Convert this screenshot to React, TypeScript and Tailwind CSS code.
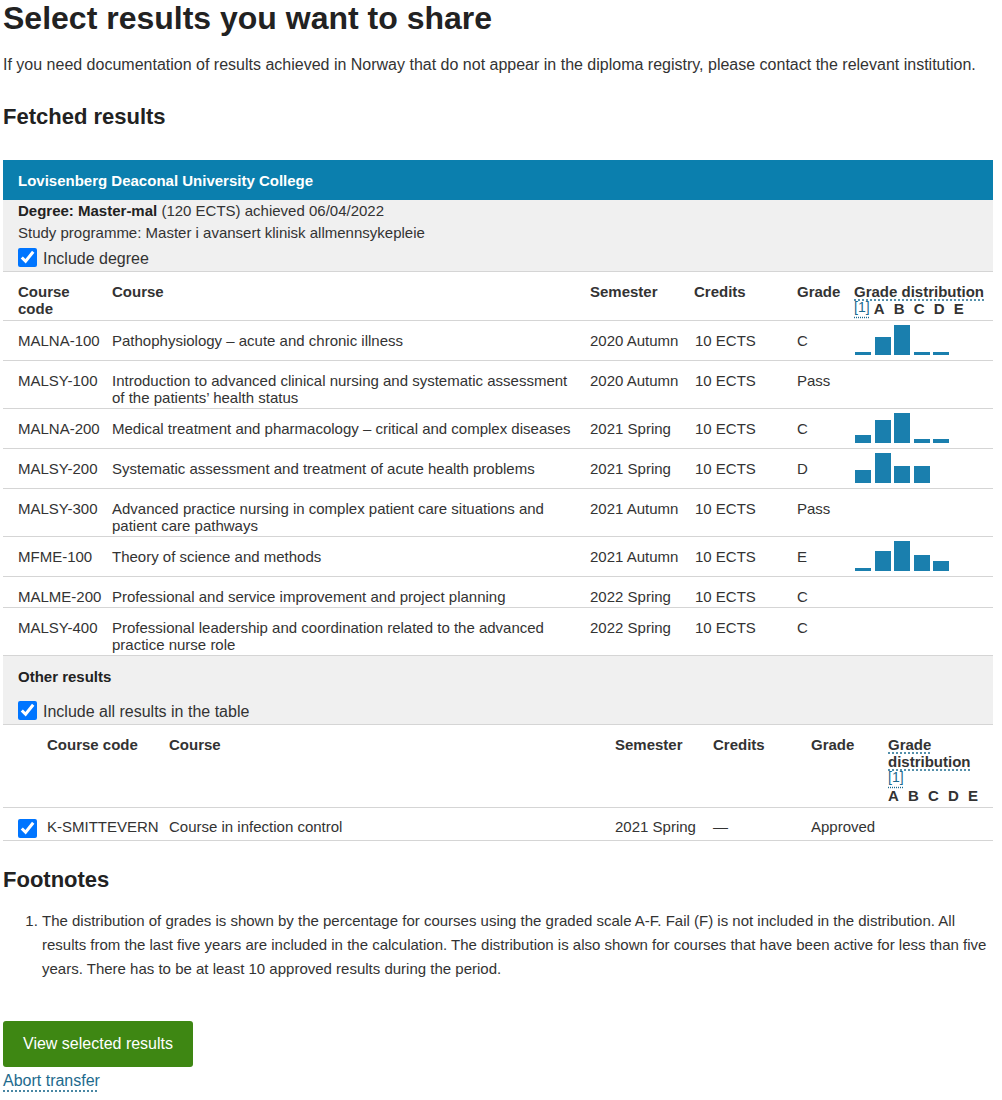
import { useState } from 'react';

interface Result {
  code: string;
  name: string;
  semester: string;
  credits: string;
  grade: string;
  dist?: number[];
}

const results: Result[] = [
  { code: 'MALNA-100', name: 'Pathophysiology – acute and chronic illness', semester: '2020 Autumn', credits: '10 ECTS', grade: 'C', dist: [3, 18, 30, 3, 3] },
  { code: 'MALSY-100', name: 'Introduction to advanced clinical nursing and systematic assessment of the patients’ health status', semester: '2020 Autumn', credits: '10 ECTS', grade: 'Pass' },
  { code: 'MALNA-200', name: 'Medical treatment and pharmacology – critical and complex diseases', semester: '2021 Spring', credits: '10 ECTS', grade: 'C', dist: [8, 23, 30, 4, 4] },
  { code: 'MALSY-200', name: 'Systematic assessment and treatment of acute health problems', semester: '2021 Spring', credits: '10 ECTS', grade: 'D', dist: [13, 30, 17, 17, 0] },
  { code: 'MALSY-300', name: 'Advanced practice nursing in complex patient care situations and patient care pathways', semester: '2021 Autumn', credits: '10 ECTS', grade: 'Pass' },
  { code: 'MFME-100', name: 'Theory of science and methods', semester: '2021 Autumn', credits: '10 ECTS', grade: 'E', dist: [3, 20, 30, 16, 10] },
  { code: 'MALME-200', name: 'Professional and service improvement and project planning', semester: '2022 Spring', credits: '10 ECTS', grade: 'C' },
  { code: 'MALSY-400', name: 'Professional leadership and coordination related to the advanced practice nurse role', semester: '2022 Spring', credits: '10 ECTS', grade: 'C' },
];

function Checkbox({ checked, onChange }: { checked: boolean; onChange: () => void }) {
  return (
    <input
      type="checkbox"
      checked={checked}
      onChange={onChange}
      className="block w-[19px] h-[19px] m-0 accent-[#0075ff]"
    />
  );
}

function DistHeader() {
  return (
    <>
      <span className="underline decoration-dotted decoration-[#1b6b8f] underline-offset-[3px]">Grade distribution</span>{' '}
      <a href="#fn1" className="relative -top-[2px] text-[14px] leading-none font-normal text-[#1b6b8f] underline decoration-dotted underline-offset-[5px]">[1]</a>{' '}
      <span className="inline-flex">
        {['A', 'B', 'C', 'D', 'E'].map((l) => (
          <span key={l} className="w-[20px]">{l}</span>
        ))}
      </span>
    </>
  );
}

function Bars({ dist }: { dist: number[] }) {
  return (
    <div className="flex items-end gap-[3.5px] h-[30px]">
      {dist.map((h, i) => (
        <div key={i} className="w-[16px] bg-[#1a7fae]" style={{ height: h }} />
      ))}
    </div>
  );
}

export default function App() {
  const [includeDegree, setIncludeDegree] = useState(true);
  const [includeAll, setIncludeAll] = useState(true);
  const [includeSmitte, setIncludeSmitte] = useState(true);

  const th = 'pt-[11px] pb-[3px] pr-[10px] text-left align-top font-bold';
  const td = 'pt-[11px] pb-[2px] pr-[10px] align-top';

  return (
    <div className="w-[996px] px-[3px] font-['Liberation_Sans',Arial,sans-serif] text-[#333] bg-white pb-4">
      <h1 className="text-[32px] leading-[36px] font-bold text-[#222]">Select results you want to share</h1>
      <p className="mt-[17px] text-[16px] leading-[24px]">
        If you need documentation of results achieved in Norway that do not appear in the diploma registry, please contact the relevant institution.
      </p>

      <h2 className="mt-[26px] text-[22px] leading-[28px] font-bold text-[#222]">Fetched results</h2>

      {/* Institution card */}
      <div className="mt-[29px] text-[15px] leading-[17px]">
        <div className="h-[40px] bg-[#0b7fae] px-[15px] flex items-center text-white font-bold">
          Lovisenberg Deaconal University College
        </div>

        <div className="bg-[#f0f0f0] px-[15px] leading-[22px] border-b border-[#d5d5d5]">
          <div>
            <span className="font-bold text-[#222]">Degree: Master-mal</span> (120 ECTS) achieved 06/04/2022
          </div>
          <div>Study programme: Master i avansert klinisk allmennsykepleie</div>
          <label className="h-[27px] pt-[4px] flex items-start gap-[6px] text-[16px] leading-[22px]">
            <Checkbox checked={includeDegree} onChange={() => setIncludeDegree(!includeDegree)} />
            Include degree
          </label>
        </div>

        <table className="w-full table-fixed border-collapse">
          <colgroup>
            <col className="w-[109px]" />
            <col className="w-[478px]" />
            <col className="w-[104px]" />
            <col className="w-[103px]" />
            <col className="w-[57px]" />
            <col className="w-[139px]" />
          </colgroup>
          <thead>
            <tr className="border-b border-[#d5d5d5]">
              <th className={`${th} pl-[15px]`}>Course code</th>
              <th className={th}>Course</th>
              <th className={th}>Semester</th>
              <th className={th}>Credits</th>
              <th className={th}>Grade</th>
              <th className="pt-[11px] pb-[3px] text-left align-top font-bold">
                <DistHeader />
              </th>
            </tr>
          </thead>
          <tbody>
            {results.map((r) => (
              <tr key={r.code} className="border-b border-[#d5d5d5]">
                <td className={`${td} pl-[15px]`}>{r.code}</td>
                <td className={td}>{r.name}</td>
                <td className={td}>{r.semester}</td>
                <td className={`${td} pl-[1px]`}>{r.credits}</td>
                <td className={td}>{r.grade}</td>
                <td className="pt-[4px] pb-[5px] pl-[1px] align-top">{r.dist && <Bars dist={r.dist} />}</td>
              </tr>
            ))}
          </tbody>
        </table>

        {/* Other results */}
        <div className="bg-[#f0f0f0] px-[15px] pt-[10px] border-b border-[#d5d5d5]">
          <div className="leading-[22px] font-bold text-[#222]">Other results</div>
          <label className="mt-[8px] h-[28px] pt-[5px] flex items-start gap-[6px] text-[16px] leading-[22px]">
            <Checkbox checked={includeAll} onChange={() => setIncludeAll(!includeAll)} />
            Include all results in the table
          </label>
        </div>

        <table className="w-full table-fixed border-collapse">
          <colgroup>
            <col className="w-[44px]" />
            <col className="w-[122px]" />
            <col className="w-[446px]" />
            <col className="w-[98px]" />
            <col className="w-[98px]" />
            <col className="w-[77px]" />
            <col className="w-[105px]" />
          </colgroup>
          <thead>
            <tr className="border-b border-[#d5d5d5]">
              <th className={`${th} pl-[15px]`}></th>
              <th className={th}>Course code</th>
              <th className={th}>Course</th>
              <th className={th}>Semester</th>
              <th className={th}>Credits</th>
              <th className={th}>Grade</th>
              <th className="pt-[11px] pb-[3px] pr-[10px] text-left align-top font-bold">
                <DistHeader />
              </th>
            </tr>
          </thead>
          <tbody>
            <tr className="border-b border-[#d5d5d5]">
              <td className="pt-[11px] pb-[2px] pl-[15px] align-top">
                <Checkbox checked={includeSmitte} onChange={() => setIncludeSmitte(!includeSmitte)} />
              </td>
              <td className="pt-[10px] pr-[10px] align-top">K-SMITTEVERN</td>
              <td className="pt-[10px] pr-[10px] align-top">Course in infection control</td>
              <td className="pt-[10px] pr-[10px] align-top">2021 Spring</td>
              <td className="pt-[10px] pr-[10px] align-top">—</td>
              <td className="pt-[10px] pr-[10px] align-top">Approved</td>
              <td className="pt-[10px] align-top"></td>
            </tr>
          </tbody>
        </table>
      </div>

      <h2 className="mt-[25px] text-[22px] leading-[28px] font-bold text-[#222]">Footnotes</h2>
      <ol className="mt-[15px] list-decimal pl-[39px] text-[15px] leading-[24px]">
        <li id="fn1">
          The distribution of grades is shown by the percentage for courses using the graded scale A-F. Fail (F) is not included in the distribution. All results from the last five years are included in the calculation. The distribution is also shown for courses that have been active for less than five years. There has to be at least 10 approved results during the period.
        </li>
      </ol>

      <button className="mt-[40px] h-[46px] px-[20px] bg-[#3e8713] hover:bg-[#336f10] text-white text-[16px] rounded-[3px]">
        View selected results
      </button>
      <div className="mt-[2px] leading-[24px] text-[16px]">
        <a href="#" className="text-[#1d6a8d] underline decoration-dotted underline-offset-[5px]">Abort transfer</a>
      </div>
    </div>
  );
}
